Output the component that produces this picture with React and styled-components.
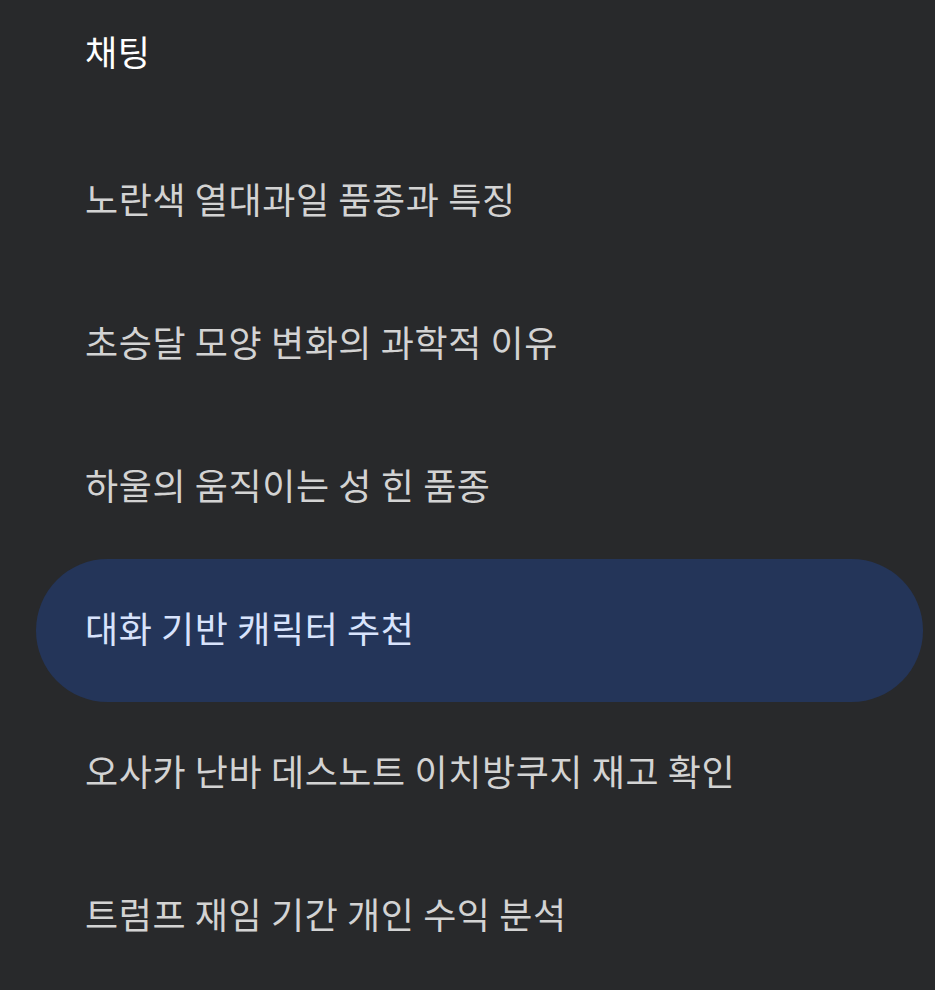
import styled, { createGlobalStyle } from 'styled-components';

const GlobalStyle = createGlobalStyle`
	html, body {
		margin: 0;
		padding: 0;
		background: #28292b;
	}
	body {
		font-family: 'Noto Sans CJK KR', 'Noto Sans', sans-serif;
	}
`;

const chats = [
	'노란색 열대과일 품종과 특징',
	'초승달 모양 변화의 과학적 이유',
	'하울의 움직이는 성 힌 품종',
	'대화 기반 캐릭터 추천',
	'오사카 난바 데스노트 이치방쿠지 재고 확인',
	'트럼프 재임 기간 개인 수익 분석',
];

const App = () => {
	const selected = 3;
	return (
		<Container>
			<GlobalStyle />
			<Header>채팅</Header>
			<List>
				{chats.map((title, i) => (
					<Item key={title} active={i === selected}>
						{title}
					</Item>
				))}
			</List>
		</Container>
	);
};

const Container = styled.div`
	width: 935px;
	height: 990px;
	overflow: hidden;
	background: #28292b;
`;

const Header = styled.h2`
	margin: 0;
	height: 130px;
	box-sizing: border-box;
	padding: 28px 0 0 85px;
	font-size: 35px;
	font-weight: 400;
	line-height: 46px;
	letter-spacing: 0.5px;
	color: #ffffff;
`;

const List = styled.ul`
	list-style: none;
	margin: 0;
	padding: 0 12px 0 36px;
	display: flex;
	flex-direction: column;
`;

const Item = styled.li.withConfig({
	shouldForwardProp: (prop) => prop !== 'active',
})`
	display: flex;
	align-items: center;
	height: 143px;
	padding-left: 49px;
	padding-bottom: 8px;
	box-sizing: border-box;
	border-radius: 72px;
	font-size: 36px;
	font-weight: 400;
	letter-spacing: 0.6px;
	color: ${(p) => (p.active ? '#d8e3fc' : '#d3d3d3')};
	background: ${(p) => (p.active ? '#243559' : 'transparent')};
	white-space: nowrap;
`;

export default App;
